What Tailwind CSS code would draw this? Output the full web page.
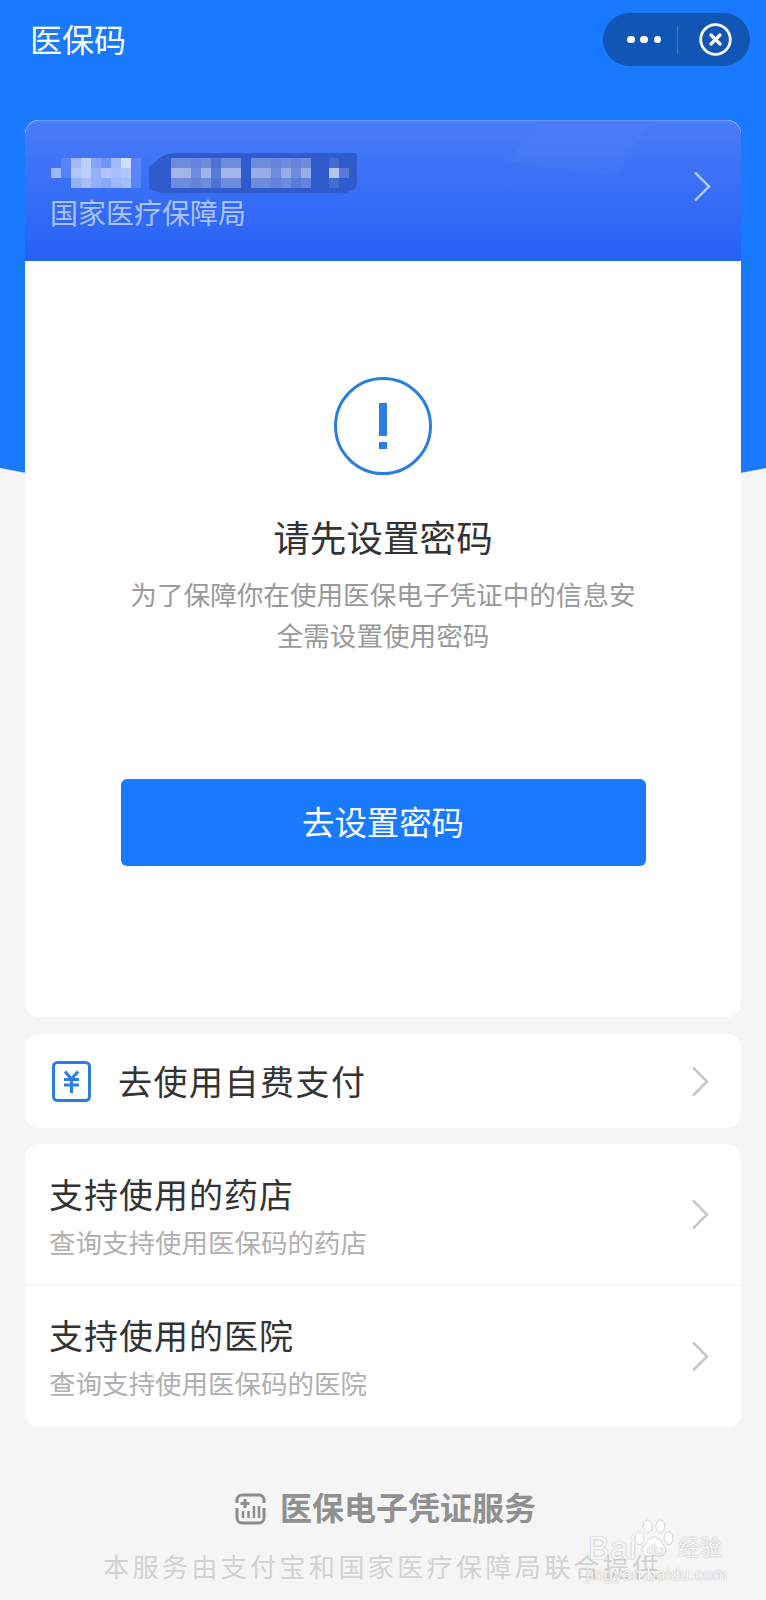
<!DOCTYPE html>
<html lang="zh-CN">
<head>
  <meta charset="UTF-8" />
  <title>医保码</title>
  <script src="https://cdn.jsdelivr.net/npm/@tailwindcss/browser@4"></script>
</head>
<body class="bg-[#f5f5f5] font-['Liberation_Sans','Noto_Sans_CJK_SC',sans-serif]">
  <div class="relative w-[766px] h-[1600px] overflow-hidden">
    <!-- blue header background -->
    <svg class="absolute left-0 top-0" width="766" height="520" viewBox="0 0 766 520"><path d="M0 0H766V468Q383 544 0 468Z" fill="#1a7aff"/></svg>

    <div class="relative px-[25px]">
      <!-- nav bar -->
      <div class="h-[120px] flex items-start justify-between">
        <h1 class="mt-[19px] ml-[5px] text-[32px] leading-[44px] font-normal text-white">医保码</h1>
        <div class="mt-[13px] -mr-[9px] w-[147px] h-[53px] rounded-full bg-[#1156b5] flex items-center">
          <div class="ml-[24px] w-[34px] flex justify-between">
            <span class="w-[7.500px] h-[7.500px] rounded-full bg-white"></span>
            <span class="w-[7.500px] h-[7.500px] rounded-full bg-white"></span>
            <span class="w-[7.500px] h-[7.500px] rounded-full bg-white"></span>
          </div>
          <span class="ml-[16px] w-px h-[28px] bg-white/20"></span>
          <svg class="ml-[21px]" width="33" height="33" viewBox="0 0 33 33" fill="none" stroke="#fff"><circle cx="16.5" cy="16.5" r="14.8" stroke-width="2.8"/><path d="M12 12l9 9M21 12l-9 9" stroke-width="3.2" stroke-linecap="round"/></svg>
        </div>
      </div>

      <!-- main card -->
      <div class="h-[897px] rounded-[14px] bg-white overflow-hidden">
        <div class="relative h-[141px] bg-gradient-to-b from-[#4a7bf7] to-[#2561f6] border-t border-[#6f97fa] rounded-t-[14px] flex items-center justify-between">
          <svg class="absolute left-0 top-0" width="717" height="80" viewBox="0 0 717 80"><path d="M483 40L515 2H625L590 55Z" fill="#fff" fill-opacity=".025"/></svg>
          <svg id="mosaic" class="absolute left-[24px] top-[32px] blur-[0.6px]" width="320" height="42" viewBox="0 0 320 42">
            <path d="M112 4Q116 0 130 0H308V30Q308 40 290 40H112L100 36V14Z" fill="#2f5bcd"/>
          </svg>
          <p class="mt-[48px] ml-[25px] text-[28px] leading-[40px] text-white/60">国家医疗保障局</p>
          <svg class="mr-[30px] mt-[-9px]" width="18" height="31" viewBox="0 0 18 31" fill="none" stroke="#fff" stroke-opacity=".65" stroke-width="2.400"><path d="M2 1.5l14 14-14 14"/></svg>
        </div>

        <div class="flex flex-col items-center">
          <div class="mt-[116px] w-[98px] h-[98px] rounded-full border-[3.500px] border-[#2a7de1] flex flex-col items-center">
            <span class="mt-[23px] w-[8px] h-[33px] bg-[#2a7de1]"></span>
            <span class="mt-[6px] w-[8px] h-[7px] bg-[#2a7de1]"></span>
          </div>
          <h2 class="mt-[39px] text-[36.600px] leading-[52px] font-normal text-[#333]">请先设置密码</h2>
          <p class="mt-[10px] w-[530px] text-center text-[26.600px] leading-[41px] text-[#999]">为了保障你在使用医保电子凭证中的信息安全需设置使用密码</p>
          <button class="mt-[121px] w-[525px] h-[87px] pt-[4px] rounded-[6px] bg-[#1a7aff] text-white text-[32.400px]">去设置密码</button>
        </div>
      </div>

      <!-- self pay -->
      <div class="mt-[17px] h-[94px] rounded-[14px] bg-white flex items-center justify-between">
        <div class="flex items-center">
          <svg class="ml-[27px]" width="39" height="41" viewBox="0 0 39 41" fill="none" stroke="#2a7de1"><rect x="1.5" y="1.5" width="36" height="38" rx="4" stroke-width="3"/><path d="M13 10.500l6.500 7.500 6.500-7.500M12 18.500h15M12 24h15" stroke-width="3"/><path d="M19.500 18v14" stroke-width="3"/></svg>
          <span class="ml-[27px] pt-[4px] text-[34px] tracking-[1.500px] text-[#333]">去使用自费支付</span>
        </div>
        <svg class="mr-[32px]" width="18" height="31" viewBox="0 0 18 31" fill="none" stroke="#c8c8c8" stroke-width="2.600"><path d="M2 1.500l14 14-14 14"/></svg>
      </div>

      <!-- supported places -->
      <div class="mt-[16px] rounded-[14px] bg-white">
        <div class="h-[141px] flex items-center justify-between border-b border-[#eee]">
          <div class="ml-[24px] pt-[12px]">
            <p class="text-[34px] leading-[48px] tracking-[1px] text-[#333]">支持使用的药店</p>
            <p class="text-[26.500px] leading-[48px] text-[#b0b0b0]">查询支持使用医保码的药店</p>
          </div>
          <svg class="mr-[32px]" width="18" height="31" viewBox="0 0 18 31" fill="none" stroke="#c8c8c8" stroke-width="2.600"><path d="M2 1.500l14 14-14 14"/></svg>
        </div>
        <div class="h-[142px] flex items-center justify-between">
          <div class="ml-[24px] pt-[10px]">
            <p class="text-[34px] leading-[48px] tracking-[1px] text-[#333]">支持使用的医院</p>
            <p class="text-[26.500px] leading-[48px] text-[#b0b0b0]">查询支持使用医保码的医院</p>
          </div>
          <svg class="mr-[32px]" width="18" height="31" viewBox="0 0 18 31" fill="none" stroke="#c8c8c8" stroke-width="2.600"><path d="M2 1.500l14 14-14 14"/></svg>
        </div>
      </div>

      <!-- footer -->
      <div class="mt-[66px] ml-[5px] flex items-center justify-center gap-[14px]">
        <svg width="31" height="32" viewBox="0 0 31 32" fill="none" stroke="#8c8c8c"><path d="M2 10V7a5 5 0 0 1 5-5h17a5 5 0 0 1 5 5v3M2 15v10a5 5 0 0 0 5 5h17a5 5 0 0 0 5-5V15" stroke-width="3"/><path d="M10 6v9M5.500 10.500h9" stroke-width="3"/><path d="M8 18v7M13.500 18v7M19 13v12M24 13v12" stroke-width="2.500"/></svg>
        <span class="text-[32px] font-bold text-[#909090] leading-[32px]">医保电子凭证服务</span>
      </div>
      <p class="mt-[24px] -ml-[1px] text-center text-[26px] tracking-[3.400px] leading-[38px] text-[#d2d2d2] whitespace-nowrap">本服务由支付宝和国家医疗保障局联合提供</p>
    </div>

    <!-- baidu watermark -->
    <div class="absolute left-[585px] top-[1515px] w-[180px] h-[85px] text-white/90 [text-shadow:0_0_1.500px_#999]">
      <svg class="absolute left-[49px] top-[3px]" width="40" height="42" viewBox="0 0 44 46" fill="#fff" fill-opacity=".8" stroke="#d0d0d0"><ellipse cx="6" cy="22" rx="5" ry="7"/><ellipse cx="15" cy="9" rx="5" ry="7"/><ellipse cx="29" cy="9" rx="5" ry="7"/><ellipse cx="38" cy="22" rx="5" ry="7"/><path d="M22 21c5 0 7 5 11 9 4 5 2 12-5 12-3 0-4-1-6-1s-3 1-6 1c-7 0-9-7-5-12 4-4 6-9 11-9z"/></svg>
      <span class="absolute left-[3px] top-[15px] text-[32px] leading-[36px] tracking-[1px]">Bai</span>
      <span class="absolute left-[62px] top-[26px] text-[15px] leading-[18px]">du</span>
      <span class="absolute left-[93px] top-[18px] text-[22px] leading-[30px]">经验</span>
      <span class="absolute left-[1px] top-[49px] text-[16.500px] leading-[20px] tracking-[0.500px]">jingyan.baidu.com</span>
    </div>
  </div>

  <script>
    // blurred name: [x, y, opacity] cells, 10px square
    const cells = [
      [0,15,.5],[10,5,.12],[10,15,.12],
      [20,5,.5],[20,15,.6],[20,25,.45],[30,5,.65],[30,15,.65],[30,25,.55],
      [40,5,.35],[40,15,.45],[40,25,.45],[50,5,.25],[50,15,.6],[50,25,.4],
      [60,5,.5],[60,15,.55],[60,25,.5],[70,5,.75],[70,15,.6],[70,25,.55],[80,5,.15],[80,15,.15],[80,25,.15],
      [120,5,.3],[120,15,.55],[120,25,.3],[130,5,.3],[130,15,.55],[130,25,.3],[140,5,.25],[140,15,.3],[140,25,.25],
      [150,5,.3],[150,15,.55],[150,25,.3],[160,5,.15],[160,15,.2],[160,25,.15],
      [170,5,.3],[170,15,.55],[170,25,.3],[180,5,.3],[180,15,.55],[180,25,.3],
      [200,5,.3],[200,15,.5],[200,25,.3],[210,5,.3],[210,15,.5],[210,25,.3],[220,5,.25],[220,15,.3],[220,25,.25],
      [230,5,.3],[230,15,.5],[230,25,.3],[240,5,.25],[240,15,.3],[240,25,.2],[250,5,.3],[250,15,.5],[250,25,.25],
      [278,5,.1],[278,15,.65],[278,25,.1],[288,15,.2]
    ];
    const mosaic = document.getElementById("mosaic");
    cells.forEach(([x, y, o]) => {
      const r = document.createElementNS("http://www.w3.org/2000/svg", "rect");
      r.setAttribute("x", x + 2);
      r.setAttribute("y", y);
      r.setAttribute("width", 10);
      r.setAttribute("height", 10);
      r.setAttribute("fill", "#fff");
      r.setAttribute("fill-opacity", o);
      mosaic.appendChild(r);
    });
  </script>
</body>
</html>
